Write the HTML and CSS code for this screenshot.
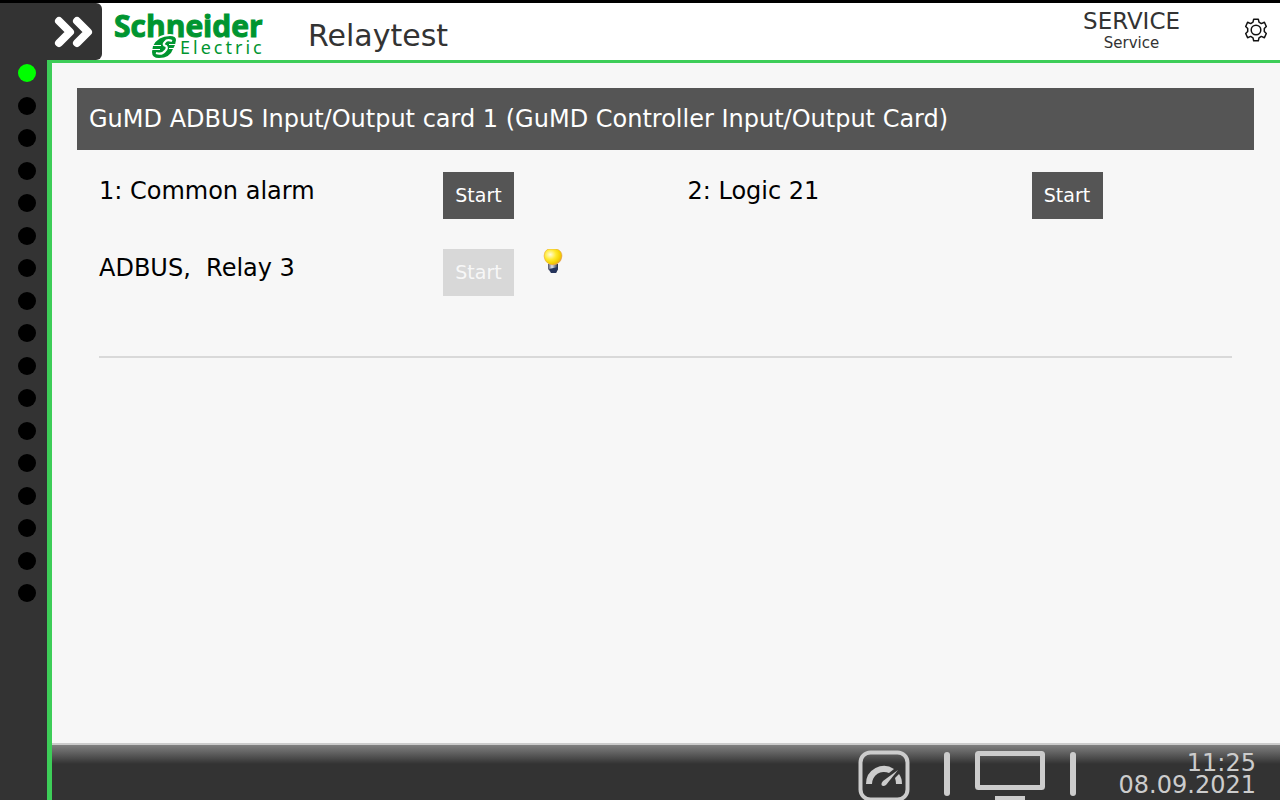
FILE: index.html
```html
<!DOCTYPE html>
<html lang="en">
<head>
  <meta charset="UTF-8" />
  <meta name="viewport" content="width=device-width, initial-scale=1.0" />
  <title>Relaytest</title>
  <link rel="stylesheet" href="styles.css">
</head>
<body>
  <!-- Top bar -->
  <header class="topbar">
    <button type="button" class="menu-button" aria-label="Open menu">
      <svg width="40" height="32" viewBox="0 0 40 32" fill="none" stroke="#fff" stroke-width="8" stroke-linecap="round" stroke-linejoin="round">
        <path d="M5 5 L16 16 L5 27" />
        <path d="M23 5 L34 16 L23 27" />
      </svg>
    </button>
    <div class="brand">
      <svg width="156" height="57" viewBox="0 0 156 57">
        <text class="logo-name" x="0" y="34">Schneider</text>
        <!-- Logo mark -->
        <path d="M36 46 Q41 31 56 31 Q65 31 64 41 Q59 56 48 57 Q37 58 36 46 Z" fill="#fff" />
        <path d="M39 43 Q44 33 56 33 Q62 33 62 37 L61 42 L59 46 Q56 55 45 55 Q38 55 38 49 Z" fill="#009530" />
        <path d="M58 38 Q53 36 51 39 Q48 42 52 43 Q54 45 51 48 Q48 52 42 50" fill="none" stroke="#fff" stroke-width="2.200" />
        <path d="M38 42.500 H47 M38 46.500 H46 M55 41.500 H64 M55 45.500 H63" fill="none" stroke="#fff" stroke-width="1" />
        <text class="logo-sub" x="66" y="51">Electric</text>
      </svg>
    </div>
    <h1 class="page-title">Relaytest</h1>
    <div class="user">
      <div class="user-role">SERVICE</div>
      <div class="user-name">Service</div>
    </div>
    <button type="button" class="settings-button" aria-label="Settings">
      <svg width="24" height="24" viewBox="0 0 24 24" fill="none" stroke="#111" stroke-width="1.500" stroke-linejoin="round">
        <path d="M9.700 1.200 H14.300 L15 4.200 L17.300 5.600 L20.400 4.300 L22.300 8.500 L20.300 10.500 V13.500 L22.300 15.500 L20.400 19.700 L17.300 18.400 L15 19.800 L14.300 22.800 H9.700 L9 19.800 L6.700 18.400 L3.600 19.700 L1.700 15.500 L3.700 13.500 V10.500 L1.700 8.500 L3.600 4.300 L6.700 5.600 L9 4.200 Z" />
        <circle cx="12" cy="12" r="4.800" />
      </svg>
    </button>
  </header>

  <div class="layout">
    <!-- Status lamps -->
    <aside class="rail">
      <ul class="lamps">
        <li class="lamp on"></li>
        <li class="lamp"></li>
        <li class="lamp"></li>
        <li class="lamp"></li>
        <li class="lamp"></li>
        <li class="lamp"></li>
        <li class="lamp"></li>
        <li class="lamp"></li>
        <li class="lamp"></li>
        <li class="lamp"></li>
        <li class="lamp"></li>
        <li class="lamp"></li>
        <li class="lamp"></li>
        <li class="lamp"></li>
        <li class="lamp"></li>
        <li class="lamp"></li>
        <li class="lamp"></li>
      </ul>
    </aside>

    <div class="content">
      <main>
        <h2 class="card-title">GuMD ADBUS Input/Output card 1 (GuMD Controller Input/Output Card)</h2>
        <div class="relays">
          <div class="relay">
            <span class="relay-name" id="relay-1">1: Common alarm</span>
            <button type="button" class="start-button" aria-describedby="relay-1">Start</button>
          </div>
          <div class="relay">
            <span class="relay-name" id="relay-2">2: Logic 21</span>
            <button type="button" class="start-button" aria-describedby="relay-2">Start</button>
          </div>
          <div class="relay">
            <span class="relay-name" id="relay-3">ADBUS,&nbsp; Relay 3</span>
            <button type="button" class="start-button" aria-describedby="relay-3" disabled>Start</button>
            <svg class="bulb" width="20" height="24" viewBox="0 0 20 24">
              <defs>
                <radialGradient id="glass" cx="0.35" cy="0.35" r="0.7">
                  <stop offset="0" stop-color="#fffce0" />
                  <stop offset="0.45" stop-color="#ffea30" />
                  <stop offset="0.8" stop-color="#f3cf00" />
                  <stop offset="1" stop-color="#e59a3c" />
                </radialGradient>
                <linearGradient id="socket">
                  <stop offset="0" stop-color="#556" />
                  <stop offset="0.4" stop-color="#dde3ee" />
                  <stop offset="1" stop-color="#1c2638" />
                </linearGradient>
              </defs>
              <path d="M5 15 H15 V20 L13 24 H8 L5 20 Z" fill="url(#socket)" />
              <path d="M6 20 L15 18 V20 L13 24 H8 Z" fill="#25345c" />
              <path d="M5 0 H14 Q19 2 19 7 Q19 12 14 15 Q10 17 6 15 Q1 12 1 7 Q1 2 5 0 Z" fill="url(#glass)" stroke="#e8a850" stroke-width="0.600" />
            </svg>
          </div>
        </div>
        <hr class="divider">
      </main>

      <!-- Bottom bar -->
      <footer class="bottombar">
        <button type="button" class="bar-button gauge-button" aria-label="Gauges">
          <svg width="52" height="52" viewBox="0 0 52 52">
            <rect x="2.500" y="2.500" width="47" height="47" rx="10" fill="none" stroke="#ccc" stroke-width="4" />
            <path d="M8 34 A18 18 0 0 1 36 19 L31 23 A12 12 0 0 0 14 34 Z" fill="#ccc" />
            <path d="M41 24 Q44 28 44 34 H38 Q38 31 37 28 Z" fill="#ccc" />
            <path d="M40 20 L28 35 Q25 37 23.500 35 Q23 33 25 31 Z" fill="#ccc" />
          </svg>
        </button>
        <span class="separator"></span>
        <button type="button" class="bar-button" aria-label="Screen">
          <svg width="70" height="50" viewBox="0 0 70 50">
            <rect x="2.500" y="2.500" width="65" height="34" rx="1" fill="none" stroke="#ccc" stroke-width="5" />
            <rect x="20" y="45" width="30" height="5" fill="#ccc" />
          </svg>
        </button>
        <span class="separator"></span>
        <div class="clock">
          <div>11:25</div>
          <div>08.09.2021</div>
        </div>
      </footer>
    </div>
  </div>
</body>
</html>
```

FILE: styles.css
```css
* {
  margin: 0;
  padding: 0;
  box-sizing: border-box;
}

body {
  display: flex;
  flex-direction: column;
  height: 100vh;
  border-top: 3px solid #000;
  background-color: #333;
  color: #000;
  font-family: "DejaVu Sans", sans-serif;
  overflow: hidden;
}

button {
  border: none;
  background: none;
  font-family: inherit;
  cursor: pointer;
}

svg {
  display: block;
}

/* Top bar */
.topbar {
  display: flex;
  background-color: #fff;
  color: #333;
}

.menu-button {
  width: 102px;
  height: 57px;
  padding: 0 8px 0 54px;
  background-color: #333;
  border-radius: 0 6px 6px 0;
}

.brand {
  padding-left: 12px;
}

.logo-name {
  fill: #009530;
  stroke: #009530;
  stroke-width: 1px;
  font: 700 30px "Open Sans", sans-serif;
}

.logo-sub {
  fill: #009530;
  font: 400 18px "Noto Sans", sans-serif;
  letter-spacing: 3px;
}

.page-title {
  flex: 1;
  padding-left: 38px;
  font-size: 30px;
  font-weight: 400;
  line-height: 66px;
  height: 57px;
}

.user {
  padding-top: 6px;
  text-align: center;
}

.user-role {
  font-size: 23px;
  line-height: 24px;
}

.user-name {
  font-size: 15px;
  line-height: 20px;
}

.settings-button {
  padding: 0 12px 4px 64px;
}

/* Page body */
.layout {
  flex: 1;
  display: flex;
  min-height: 0;
}

.rail {
  width: 47px;
  padding: 4px 0 0 18px;
}

.lamps {
  display: flex;
  flex-direction: column;
  justify-content: space-between;
  height: 538px;
  list-style: none;
}

.lamp {
  width: 18px;
  height: 18px;
  border-radius: 50%;
  background-color: #000;
}

.lamp.on {
  background-color: #0f0;
}

.content {
  flex: 1;
  display: flex;
  flex-direction: column;
  min-width: 0;
  border-top: 3px solid #3dcd58;
  border-left: 5px solid #3dcd58;
}

main {
  flex: 1;
  padding: 25px 26px 0 25px;
  background-color: #f7f7f7;
}

.card-title {
  padding-left: 12px;
  background-color: #555;
  color: #fff;
  font-size: 24px;
  font-weight: 400;
  line-height: 62px;
}

/* Relays */
.relays {
  display: grid;
  grid-template-columns: 1fr 1fr;
  row-gap: 30px;
  padding-top: 22px;
}

.relay {
  display: grid;
  grid-template-columns: 344px auto 1fr;
  height: 47px;
  padding-left: 22px;
}

.relay-name {
  font-size: 24px;
  line-height: 38px;
}

.start-button {
  justify-self: start;
  min-width: 71px;
  padding: 0 11px 2px;
  background-color: #555;
  color: #fff;
  font-size: 19px;
}

.start-button:disabled {
  background-color: #d8d8d8;
  color: #f7f7f7;
  cursor: default;
}

.bulb {
  margin-left: 29px;
}

.divider {
  margin: 60px 22px 0;
  border: none;
  border-top: 2px solid #d9d9d9;
}

/* Bottom bar */
.bottombar {
  display: flex;
  height: 57px;
  padding: 5px 24px 0 0;
  justify-content: flex-end;
  border-top: 2px solid #ccc;
  background: linear-gradient(#808080, #333 19px);
  color: #ccc;
  overflow: hidden;
}

.bar-button {
  height: 52px;
}

.gauge-button {
  margin-right: 9px;
}

.separator {
  width: 6px;
  height: 44px;
  margin: 2px 25px 0;
  border-radius: 3px;
  background-color: #ccc;
}

.clock {
  width: 155px;
  padding-top: 2px;
  font-size: 24px;
  line-height: 22px;
  text-align: right;
}
```
